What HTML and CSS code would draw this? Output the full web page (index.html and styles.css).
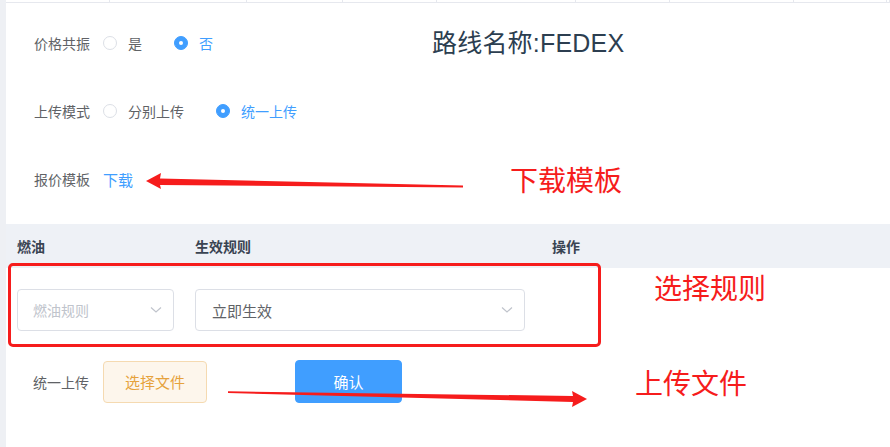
FILE: index.html
```html
<!DOCTYPE html>
<html>
<head>
  <meta charset="utf-8">
  <title>路线报价上传</title>
  <link rel="stylesheet" href="styles.css">
</head>
<body>
  <div class="page">
    <div class="side-strip"></div>

    <main class="main">
      <!-- borde de la tabla superior -->
      <div class="top-edge">
        <span></span><span></span><span></span><span></span><span></span><span></span><span></span><span></span><span></span>
      </div>

      <section class="form">
        <div class="form-row">
          <label class="form-label">价格共振</label>
          <div class="radio-group">
            <span class="radio"><i class="radio-dot"></i>是</span>
            <span class="radio is-checked"><i class="radio-dot"></i>否</span>
          </div>
          <h1 class="route-title">路线名称:FEDEX</h1>
        </div>

        <div class="form-row">
          <label class="form-label">上传模式</label>
          <div class="radio-group">
            <span class="radio"><i class="radio-dot"></i>分别上传</span>
            <span class="radio is-checked"><i class="radio-dot"></i>统一上传</span>
          </div>
        </div>

        <div class="form-row">
          <label class="form-label">报价模板</label>
          <a href="#" class="link">下载</a>
        </div>
      </section>

      <section class="rule-table">
        <div class="table-head">
          <div class="cell col-fuel">燃油</div>
          <div class="cell col-rule">生效规则</div>
          <div class="cell col-op">操作</div>
        </div>
        <div class="table-row">
          <div class="cell col-fuel">
            <div class="select select-small">
              <span class="placeholder">燃油规则</span>
              <svg class="chevron" width="12" height="8" viewBox="0 0 12 8"><polyline points="1,1.5 6,6 11,1.5" fill="none" stroke="#c0c4cc" stroke-width="1.2"/></svg>
            </div>
          </div>
          <div class="cell col-rule">
            <div class="select select-wide">
              <span class="value">立即生效</span>
              <svg class="chevron" width="12" height="8" viewBox="0 0 12 8"><polyline points="1,1.5 6,6 11,1.5" fill="none" stroke="#c0c4cc" stroke-width="1.2"/></svg>
            </div>
          </div>
          <div class="cell col-op"></div>
        </div>
      </section>

      <div class="upload-row">
        <label class="form-label">统一上传</label>
        <button class="btn btn-warning">选择文件</button>
        <button class="btn btn-primary">确认</button>
      </div>
    </main>
  </div>

  <!-- anotaciones rojas encima de la captura -->
  <div class="mark-box"></div>
  <span class="note note-download">下载模板</span>
  <span class="note note-rule">选择规则</span>
  <span class="note note-upload">上传文件</span>
  <svg class="arrows" width="890" height="447" viewBox="0 0 890 447">
    <polygon points="146,181 161,173 160,178.5 463,185.5 463,187.5 160,185 161,189" fill="#f61c1c"/>
    <polygon points="228,391.3 573,396 572,391 587,399 572,407 573,402 228,393" fill="#f61c1c"/>
  </svg>
</body>
</html>
```

FILE: styles.css
```css
body {
  margin: 0;
  font-family: "Liberation Sans", "Noto Sans CJK SC", sans-serif;
  font-size: 14px;
  color: #606266;
  background: #fff;
}

.page {
  display: flex;
  width: 890px;
  height: 447px;
  overflow: hidden;
}

.side-strip {
  width: 6px;
  flex-shrink: 0;
  background: #eef0f4;
}

.main {
  flex: 1;
  display: flex;
  flex-direction: column;
}

.top-edge {
  display: grid;
  grid-template-columns: 104px 137px 96px 94px 139px 94px 124px 93px 1fr;
  height: 2px;
  border-bottom: 1px solid #e6e8ee;
}

.top-edge span {
  border-right: 1px solid #e6e8ee;
}

/* formulario */
.form {
  padding: 20px 0 0 28px;
}

.form-row {
  display: flex;
  align-items: center;
  height: 40px;
  margin-bottom: 28px;
}

.form-row:last-child {
  margin-bottom: 25px;
}

.form-label {
  width: 69px;
  flex-shrink: 0;
  color: #606266;
}

.radio-group {
  display: flex;
  align-items: center;
}

.radio {
  display: flex;
  align-items: center;
  gap: 11px;
  margin-right: 32px;
  color: #606266;
}

.radio-dot {
  width: 12px;
  height: 12px;
  border: 1px solid #dcdfe6;
  border-radius: 50%;
  background: #fff;
  position: relative;
}

.radio.is-checked {
  color: #409eff;
}

.radio.is-checked .radio-dot {
  background: #409eff;
  border-color: #409eff;
}

.radio.is-checked .radio-dot::after {
  content: "";
  position: absolute;
  left: 4px;
  top: 4px;
  width: 4px;
  height: 4px;
  border-radius: 50%;
  background: #fff;
}

.route-title {
  margin: -5px 0 0 187px;
  font-size: 25px;
  font-weight: normal;
  color: #2c3e50;
  letter-spacing: 0.2px;
}

.link {
  color: #409eff;
  text-decoration: none;
  font-size: 15px;
}

/* tabla de reglas */
.table-head {
  display: flex;
  align-items: center;
  height: 44px;
  background: #eef1f6;
  font-weight: bold;
  color: #3a4452;
}

.table-row {
  display: flex;
  align-items: center;
  padding: 21px 0;
}

.cell {
  padding-left: 11px;
  box-sizing: border-box;
}

.col-fuel {
  width: 178px;
}

.col-rule {
  width: 357px;
}

.col-op {
  flex: 1;
}

.select {
  display: flex;
  align-items: center;
  justify-content: space-between;
  height: 42px;
  box-sizing: border-box;
  border: 1px solid #dcdfe6;
  border-radius: 4px;
  padding: 0 11px 0 15px;
}

.select-small {
  width: 157px;
}

.select-wide {
  width: 330px;
  padding-left: 16px;
}

.placeholder {
  color: #c0c4cc;
}

.value {
  font-size: 15px;
  color: #606266;
}

/* fila de subida */
.upload-row {
  display: flex;
  align-items: center;
  padding-left: 27px;
  margin-top: 8px;
}

.btn {
  font-family: inherit;
  font-size: 15px;
  height: 42px;
  border-radius: 4px;
  cursor: pointer;
}

.btn-warning {
  width: 104px;
  margin-left: 1px;
  background: #fdf6ec;
  border: 1px solid #f5dab1;
  color: #e6a23c;
}

.btn-primary {
  width: 107px;
  height: 43px;
  margin-left: 88px;
  background: #409eff;
  border: 1px solid #409eff;
  color: #fff;
}

/* anotaciones */
.mark-box {
  position: absolute;
  left: 8px;
  top: 263px;
  width: 587px;
  height: 78px;
  border: 3px solid #f61c1c;
  border-radius: 5px;
}

.note {
  position: absolute;
  font-family: "Noto Sans CJK SC", sans-serif;
  font-size: 28px;
  line-height: 1;
  color: #f61c1c;
}

.note-download {
  left: 510px;
  top: 165px;
}

.note-rule {
  left: 654px;
  top: 273px;
}

.note-upload {
  left: 635px;
  top: 368px;
}

.arrows {
  position: absolute;
  left: 0;
  top: 0;
  pointer-events: none;
}
```
